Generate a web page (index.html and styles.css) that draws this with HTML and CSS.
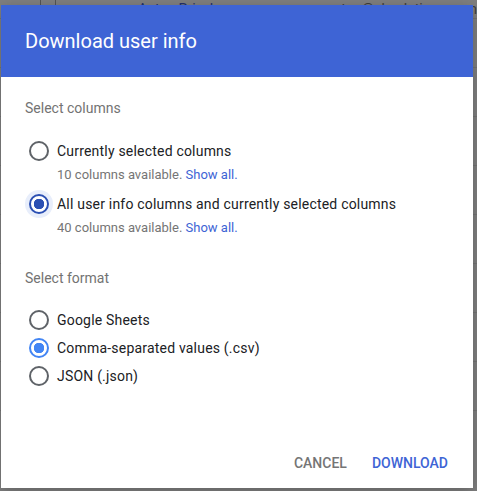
FILE: index.html
```html
<!DOCTYPE html>
<html lang="en">
<head>
    <meta charset="UTF-8">
    <meta name="viewport" content="width=device-width, initial-scale=1.0">
    <title>Download user info</title>
    <link rel="stylesheet" href="styles.css">
</head>
<body>
    <div class="page">
        <div class="page-row">
            <span class="cell-check"></span>
            <span class="cell-avatar"></span>
            <span class="cell-name">Anton Privel</span>
            <span class="cell-email">anton@ckcolutions.com</span>
        </div>
        <div class="page-row"></div>
        <div class="page-row"></div>
        <div class="page-row"></div>
        <div class="page-row"></div>
        <div class="page-row"></div>
        <div class="page-row"></div>
        <div class="page-row"></div>
        <div class="page-row"></div>
    </div>

    <div class="dialog">
        <div class="dialog-header">
            <h2>Download user info</h2>
        </div>
        <div class="dialog-body">
            <div class="group-label">Select columns</div>

            <label class="option">
                <span class="radio"></span>
                <span class="option-text">Currently selected columns</span>
            </label>
            <div class="option-sub">10 columns available. <a href="#">Show all.</a></div>

            <label class="option">
                <span class="radio checked focused"></span>
                <span class="option-text">All user info columns and currently selected columns</span>
            </label>
            <div class="option-sub">40 columns available. <a href="#">Show all.</a></div>

            <div class="group-label format-label">Select format</div>

            <div class="format-list">
                <label class="option">
                    <span class="radio"></span>
                    <span class="option-text">Google Sheets</span>
                </label>
                <label class="option">
                    <span class="radio checked"></span>
                    <span class="option-text">Comma-separated values (.csv)</span>
                </label>
                <label class="option">
                    <span class="radio"></span>
                    <span class="option-text">JSON (.json)</span>
                </label>
            </div>
        </div>
        <div class="dialog-footer">
            <button class="btn btn-cancel">Cancel</button>
            <button class="btn btn-primary">Download</button>
        </div>
    </div>
</body>
</html>
```

FILE: styles.css
```css
body {
    margin: 0;
    height: 491px;
    overflow: hidden;
    background-color: #808080;
    font-family: Roboto, "Noto Sans", sans-serif;
}
.page {
    height: 100%;
}
.page-row {
    display: flex;
    height: 48px;
    border-bottom: 1px solid #747474;
    color: #3d3d3d;
    font-size: 14px;
}
.page-row:first-child {
    margin-top: -30px;
    align-items: flex-end;
}
.cell-check {
    width: 47px;
    border-right: 1px solid #555;
    height: 100%;
}
.cell-avatar {
    width: 16px;
    border-right: 1px solid #555;
    height: 100%;
    margin-right: 28px;
}
.cell-name {
    width: 219px;
    margin-left: 54px;
    color: #23306c;
    line-height: 18px;
}
.cell-email {
    line-height: 18px;
}

.dialog {
    position: absolute;
    left: 1px;
    top: 5px;
    width: 472px;
    height: 483px;
    display: flex;
    flex-direction: column;
    background-color: #fff;
    box-shadow: 0 4px 16px rgba(0, 0, 0, 0.25);
}
.dialog-header {
    height: 72px;
    display: flex;
    align-items: center;
    padding-left: 24px;
    background-color: #3e64d5;
}
.dialog-header h2 {
    margin: 0;
    color: #fff;
    font-size: 20px;
    font-weight: 400;
}
.dialog-body {
    flex: 1;
    padding: 21px 24px 0;
}
.group-label {
    font-size: 14px;
    line-height: 20px;
    color: #737373;
    margin-bottom: 19px;
}
.format-label {
    margin-top: 31px;
    margin-bottom: 18px;
}
.option {
    display: flex;
    align-items: center;
    height: 28px;
    font-size: 14px;
    letter-spacing: 0.2px;
    color: #202124;
}
.radio {
    width: 28px;
    height: 28px;
    margin-right: 4px;
    display: flex;
    justify-content: center;
    align-items: center;
    border-radius: 50%;
}
.radio::before {
    content: "";
    width: 16px;
    height: 16px;
    border: 2px solid #5f6368;
    border-radius: 50%;
    display: block;
}
.radio.checked::before {
    border-color: #4285f4;
    background: radial-gradient(circle, #4285f4 0 5px, #fff 5.5px);
}
.radio.focused {
    background-color: #e8eefb;
}
.radio.focused::before {
    border-color: #2b4fb3;
    background: radial-gradient(circle, #2b4fb3 0 5px, #fff 5.5px);
}
.option-sub {
    padding-left: 32px;
    font-size: 13px;
    line-height: 18px;
    margin: 1px 0 6px;
    color: #757575;
}
.option-sub a {
    color: #3e64d5;
    text-decoration: none;
}
.dialog-footer {
    display: flex;
    justify-content: flex-end;
    gap: 9px;
    padding: 0 17px 7px 0;
}
.btn {
    height: 36px;
    padding: 0 8px;
    border: none;
    background: none;
    font-family: Roboto, "Noto Sans", sans-serif;
    font-size: 14px;
    font-weight: 500;
    text-transform: uppercase;
    cursor: pointer;
}
.btn-cancel {
    color: #757575;
}
.btn-primary {
    color: #3e64d5;
}
```
